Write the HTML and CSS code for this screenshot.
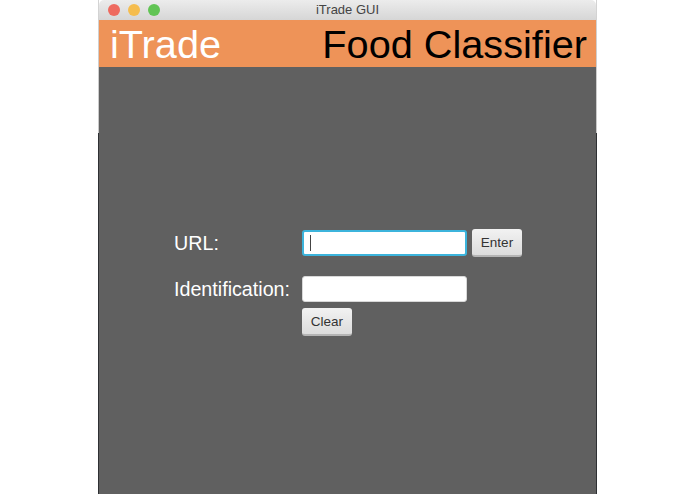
FILE: index.html
```html
<!DOCTYPE html>
<html lang="en">
<head>
<meta charset="utf-8">
<title>iTrade GUI</title>
<link rel="stylesheet" href="styles.css">
</head>
<body>
<div class="window">
  <div class="titlebar">
    <div class="lights">
      <span class="light red"></span>
      <span class="light yellow"></span>
      <span class="light green"></span>
    </div>
    <div class="title">iTrade GUI</div>
  </div>
  <header class="banner">
    <span class="brand">iTrade</span>
    <span class="product">Food Classifier</span>
  </header>
  <main class="content">
    <form class="form">
      <label class="label">URL:</label>
      <div class="field focused"><span class="caret"></span></div>
      <button type="button" class="btn">Enter</button>
      <label class="label">Identification:</label>
      <div class="field"></div>
      <span></span>
      <span></span>
      <button type="button" class="btn clear">Clear</button>
    </form>
  </main>
</div>
</body>
</html>
```
FILE: styles.css
```css
* { box-sizing: border-box; }
html, body { margin: 0; height: 100%; background: #fff; overflow: hidden; }
body { font-family: "Liberation Sans", Arial, sans-serif; padding-left: 98px; }
.window {
  width: 499px;
  height: 494px;
  display: flex;
  flex-direction: column;
  border-left: 1px solid;
  border-right: 1px solid;
  border-image: linear-gradient(to bottom, #d4d4d4 0, #c8c8c8 133px, #2e3033 133px, #2e3033 100%) 1;
}
.titlebar {
  height: 20px;
  flex: none;
  position: relative;
  background: linear-gradient(to bottom, #ececec, #d6d6d6);
  display: flex;
  align-items: center;
  justify-content: center;
  border-radius: 5px 5px 0 0;
}
.lights {
  position: absolute;
  left: 9px;
  top: 4px;
  display: flex;
  gap: 8px;
}
.light { width: 12px; height: 12px; border-radius: 50%; }
.red { background: #ee6a5f; }
.yellow { background: #f5bd4f; }
.green { background: #61c454; }
.title { font-size: 13px; color: #444; line-height: 20px; }
.banner {
  height: 47px;
  flex: none;
  background: #ee9358;
  display: flex;
  align-items: center;
  justify-content: space-between;
  padding: 2px 9px 0 11px;
  font-size: 39.7px;
  line-height: 45px;
}
.brand { color: #fff; }
.product { color: #000; }
.content {
  flex: 1;
  background: #606060;
  padding: 161px 0 0 75px;
}
.form {
  display: grid;
  grid-template-columns: 128px 165px 50px;
  grid-template-rows: 30px 44px 34px;
  align-items: center;
}
.form > :nth-child(n+4) { margin-top: 18px; }
.label { color: #fff; font-size: 19.7px; line-height: 26px; }
.field {
  width: 165px;
  height: 26px;
  background: #fff;
  border-radius: 3px;
  border: 1px solid #d8d8d8;
  display: flex;
  align-items: center;
  padding-left: 8px;
}
.field.focused { border: 2px solid #3cb4dc; padding-left: 6px; }
.caret { width: 1px; height: 16px; background: #444; }
.btn {
  width: 50px;
  height: 28px;
  margin: 0 0 0 5px;
  padding: 0;
  font-family: inherit;
  font-size: 13.5px;
  color: #333;
  background: linear-gradient(to bottom, #f2f2f2, #dcdcdc);
  border: 0;
  border-bottom: 2px solid #b4b4b4;
  border-radius: 3px;
}
.form > .btn.clear { margin: 6px 0 0; }
```
